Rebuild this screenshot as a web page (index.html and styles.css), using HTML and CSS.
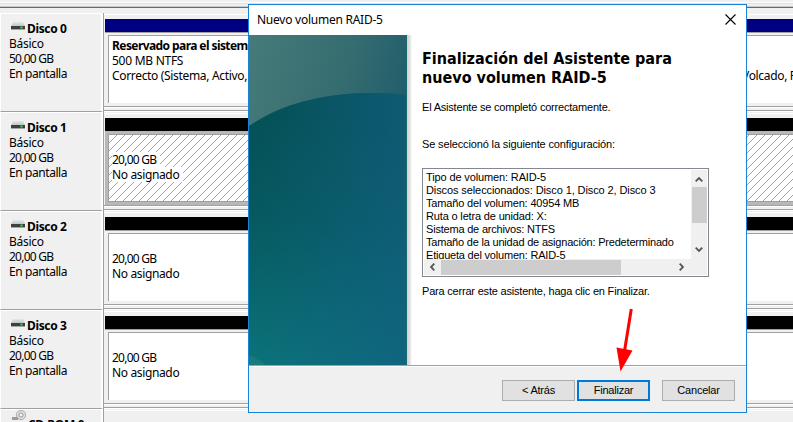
FILE: index.html
```html
<!DOCTYPE html>
<html lang="es">
<head>
<meta charset="utf-8">
<title>Nuevo volumen RAID-5</title>
<link rel="stylesheet" href="styles.css">
</head>
<body>
<svg class="defs" width="0" height="0">
  <defs>
    <linearGradient id="lid" x1="0" y1="0" x2="0" y2="1"><stop offset="0" stop-color="#e4e6e8"/><stop offset="1" stop-color="#c3c6c9"/></linearGradient>
    <symbol id="drive" viewBox="0 0 14 8">
      <path d="M2 0h10l2 4H0z" fill="url(#lid)"/>
      <path d="M0 4h14v3H0z" fill="#3c4043"/>
      <path d="M0 7h14v1H0z" fill="#a4a7a9"/>
      <path d="M9.5 4.5h2v2h-2z" fill="#35e53a"/>
    </symbol>
    <pattern id="hatch" width="8" height="8" patternUnits="userSpaceOnUse">
      <path d="M-1 9L9 -1M-1 1L1 -1M7 9L9 7" stroke="#929292" stroke-width=".85"/>
    </pattern>
  </defs>
</svg>
<main class="disks">
  <div class="splitter"></div>
  <section class="row">
    <div class="label"><div class="name"><svg class="drive"><use href="#drive"/></svg><b>Disco 0</b></div><p class="kind">Básico</p><p class="size">50,00 GB</p><p class="state">En pantalla</p></div>
    <div class="map"><div class="bar primary"></div><div class="volume system"><b>Reservado para el sistema</b><p class="fs">500 MB NTFS</p><p class="status"><span>Correcto (Sistema, Activo, </span><span class="dump">Volcado, P</span></p></div><div class="edge"></div></div>
  </section>
  <section class="row">
    <div class="label"><div class="name"><svg class="drive"><use href="#drive"/></svg><b>Disco 1</b></div><p class="kind">Básico</p><p class="size">20,00 GB</p><p class="state">En pantalla</p></div>
    <div class="map"><div class="bar"></div><div class="volume selected"><svg class="hatch"><rect width="100%" height="100%" fill="url(#hatch)"/></svg><p class="size">20,00 GB</p><p class="free">No asignado</p></div><div class="edge"></div></div>
  </section>
  <section class="row">
    <div class="label"><div class="name"><svg class="drive"><use href="#drive"/></svg><b>Disco 2</b></div><p class="kind">Básico</p><p class="size">20,00 GB</p><p class="state">En pantalla</p></div>
    <div class="map"><div class="bar"></div><div class="volume empty"><p class="size">20,00 GB</p><p class="free">No asignado</p></div><div class="edge"></div></div>
  </section>
  <section class="row">
    <div class="label"><div class="name"><svg class="drive"><use href="#drive"/></svg><b>Disco 3</b></div><p class="kind">Básico</p><p class="size">20,00 GB</p><p class="state">En pantalla</p></div>
    <div class="map"><div class="bar"></div><div class="volume empty"><p class="size">20,00 GB</p><p class="free">No asignado</p></div><div class="edge"></div></div>
  </section>
  <section class="row">
    <div class="label"><div class="name"><svg class="cd" viewBox="0 0 14 14"><circle cx="9" cy="5" r="4.7" fill="#dcdcdc" stroke="#a0a0a0" stroke-width=".8"/><circle cx="9" cy="5" r="2" fill="#f5f5f5" stroke="#929292" stroke-width=".9"/><path d="M0 7h6v3H0z" fill="#9b9d9f"/></svg><b>CD-ROM 0</b></div></div>
    <div class="map"></div>
  </section>
</main>

<div class="dialog">
  <header><span class="title">Nuevo volumen RAID-5</span><svg class="close" viewBox="0 0 11 11"><path d="M.5 .5l10 10M10.500 .5l-10 10" stroke="#000" stroke-width="1.1"/></svg></header>
  <div class="body">
    <svg class="art" viewBox="0 0 158 330">
      <defs>
        <linearGradient id="sky" x1="0" y1="0" x2="1" y2=".6"><stop offset="0" stop-color="#467b79"/><stop offset=".5" stop-color="#356c70"/><stop offset="1" stop-color="#155568"/></linearGradient>
        <linearGradient id="sea" gradientUnits="userSpaceOnUse" x1="35" y1="80" x2="35" y2="335"><stop offset="0" stop-color="#045055"/><stop offset=".4" stop-color="#06595f"/><stop offset="1" stop-color="#0b747b"/></linearGradient>
        <linearGradient id="blue" x1="0" y1="0" x2="1" y2="0"><stop offset="0" stop-color="#125f80" stop-opacity="0"/><stop offset="1" stop-color="#125f80" stop-opacity=".7"/></linearGradient>
      </defs>
      <path d="M0 0h158v330H0z" fill="url(#sky)"/>
      <path d="M0 91C36 66 82 58 124 58Q142 58 158 60V330H0z" fill="url(#sea)"/>
      <path d="M0 91C36 66 82 58 124 58Q142 58 158 60V330H0z" fill="url(#blue)"/>
      <path d="M0 320Q10 324 17 330H0z" fill="#2b8184" opacity=".5"/>
      <path d="M157.500 0v330" stroke="#1b6973"/>
    </svg>
    <div class="shade"></div>
    <div class="content">
      <h1><span class="h-a">Finalización del Asistente para</span><br><span class="h-b">nuevo volumen RAID-5</span></h1>
      <p class="done">El Asistente se completó correctamente.</p>
      <p class="chosen">Se seleccionó la siguiente configuración:</p>
      <div class="list">
        <div class="lines"><p class="l1">Tipo de volumen: RAID-5</p><p class="l2">Discos seleccionados: Disco 1, Disco 2, Disco 3</p><p class="l3">Tamaño del volumen: 40954 MB</p><p class="l3">Ruta o letra de unidad: X:</p><p class="l5">Sistema de archivos: NTFS</p><p class="l5">Tamaño de la unidad de asignación: Predeterminado</p><p class="l5">Etiqueta del volumen: RAID-5</p></div>
        <div class="vbar"><svg viewBox="0 0 8 5"><path d="M.7 4.300L4 1l3.300 3.300"/></svg><div class="vthumb"></div><svg class="down" viewBox="0 0 8 5"><path d="M.7 .7L4 4 7.300 .7"/></svg></div>
        <div class="hbar"><svg viewBox="0 0 5 8"><path d="M4.300 .7L1 4l3.300 3.300"/></svg><div class="hthumb"></div><svg class="right" viewBox="0 0 5 8"><path d="M.7 .7L4 4 .7 7.300"/></svg></div>
      </div>
      <p class="hint">Para cerrar este asistente, haga clic en Finalizar.</p>
    </div>
  </div>
  <footer><button class="back">&lt; Atrás</button><button class="finish">Finalizar</button><button class="cancel">Cancelar</button></footer>
  <svg class="arrow" viewBox="0 0 20 66"><path d="M15.300 1L8.500 43" stroke="#f00" stroke-width="3"/><path d="M.5 39.500L16.500 42.500 4.500 63.500z" fill="#f00"/></svg>
</div>
</body>
</html>
```
FILE: styles.css
```css
* { box-sizing: border-box; }
body { margin: 0; width: 793px; height: 422px; overflow: hidden; background: #f0f0f0; color: #000; font: 12px/15px "Noto Sans", sans-serif; }
p, h1 { margin: 0; white-space: nowrap; }
.defs { position: absolute; }
.disks { display: flex; flex-direction: column; height: 422px; overflow: hidden; }
.splitter { flex: none; height: 13px; background: linear-gradient(#f0f0f0 0 2px, #fff 2px 3px, #dedede 3px 4px, #f0f0f0 4px 6px, #c8c8c8 6px 7px, #696969 7px 8px, #f0f0f0 8px); }
.row { flex: none; display: flex; height: 99px; }
.label { flex: none; width: 103px; padding: 7px 0 0 8px; border: 1px solid #fff; border-width: 1px 2px 0 1px; border-bottom: 1px solid #a0a0a0; }
.name { display: flex; height: 15px; }
.name b { letter-spacing: -.35px; white-space: nowrap; }
.drive { width: 14px; height: 8px; margin: 1px 2px 0 2px; }
.cd { width: 14px; height: 14px; margin: -7px 2px 0 3px; }
.kind { letter-spacing: -.3px; }
.size { letter-spacing: -.75px; }
.state { letter-spacing: -.42px; }
.free { letter-spacing: -.36px; }
.fs { letter-spacing: -.27px; }
.map { flex: 1; min-width: 0; border-left: 1px solid #a0a0a0; padding: 6px 0 0 1px; background: linear-gradient(transparent 1px, #fff 1px 2px, transparent 2px); }
.bar { height: 14px; background: #000; border-bottom: 1px solid #a0a0a0; }
.bar.primary { background: #000080; }
.volume { height: 68px; width: 720px; margin: 2px 0 0 3px; padding: 2px 0 0 3px; background: #fff; border: 1px solid #a0a0a0; border-bottom: 0; }
.volume b { display: block; letter-spacing: -.58px; white-space: nowrap; }
.status { position: relative; letter-spacing: -.33px; }
.dump { position: absolute; left: 630px; }
.empty { padding-top: 17px; }
.edge { height: 9px; margin-left: -1px; background: linear-gradient(transparent 3px, #a0a0a0 3px 4px, #fff 4px 5px, transparent 5px 7px, #a0a0a0 7px 8px, #fff 8px); }
.selected { position: relative; padding-top: 17px; height: 68px; border-bottom: 1px solid #a0a0a0; outline: 3px solid #b8b8b8; }
.selected p { position: relative; width: max-content; padding-right: 4px; background: #fff; }
.hatch { position: absolute; inset: 0; width: 100%; height: 100%; }

.dialog { position: absolute; left: 248px; top: 4px; width: 499px; height: 409px; border: 1px solid #1883d7; background: #fff; display: flex; flex-direction: column; }
.dialog header { height: 30px; display: flex; justify-content: space-between; padding: 7px 10px 0 8px; }
.title { letter-spacing: -.25px; }
.close { width: 11px; height: 11px; margin-top: 2px; }
.body { height: 330px; display: flex; }
.art { width: 158px; height: 330px; }
.shade { width: 5px; background: linear-gradient(90deg, #cfcfcf, #e3e3e3 60%, #fff); }
.content { padding: 14px 0 0 10px; font: 11px/13px "Liberation Sans", sans-serif; }
h1 { font: bold 16px/19px "DejaVu Sans Condensed", "DejaVu Sans", sans-serif; height: 38px; }
.done { margin-top: 14px; letter-spacing: -.2px; }
.chosen { margin-top: 24px; letter-spacing: -.14px; }
.list { width: 287px; height: 109px; margin-top: 17px; padding: 1px; border: 1px solid #828790; display: grid; grid-template: 89px 16px / 267px 16px; }
.lines { overflow: hidden; padding: 1px 0 0 2px; }
.l1 { letter-spacing: -.13px; }
.l2 { letter-spacing: -.1px; }
.l3 { letter-spacing: -.16px; }
.l5 { letter-spacing: -.2px; }
.vbar { background: #f0f0f0; display: flex; flex-direction: column; align-items: center; }
.vbar svg { width: 8px; height: 5px; margin: 7px 0 5px; }
.vthumb { width: 15px; height: 36px; background: #cdcdcd; }
.vbar .down { margin: 24px 0 0; }
.list path { fill: none; stroke: #555; stroke-width: 1.8; }
.hbar { grid-column: 1 / 3; background: #f0f0f0; display: flex; align-items: center; }
.hbar svg { width: 5px; height: 8px; margin: 0 6px 0 6px; }
.hthumb { width: 180px; height: 15px; background: #cdcdcd; }
.hbar .right { margin: 0 0 0 58px; }
.hint { margin-top: 8px; letter-spacing: -.2px; }
.dialog footer { height: 47px; width: 497px; border-top: 1px solid #a0a0a0; box-shadow: inset 0 1px #fff; background: #f0f0f0; padding: 14px 0 0 253px; display: flex; }
button { width: 73px; height: 21px; border: 1px solid #adadad; background: #e1e1e1; color: #000; padding: 0; font: 11px/17px "Liberation Sans", sans-serif; letter-spacing: -.22px; }
.finish { margin: 0 12px 0 2px; border: 2px solid #0078d7; }
.arrow { position: absolute; left: 367px; top: 303px; width: 20px; height: 66px; }
```
